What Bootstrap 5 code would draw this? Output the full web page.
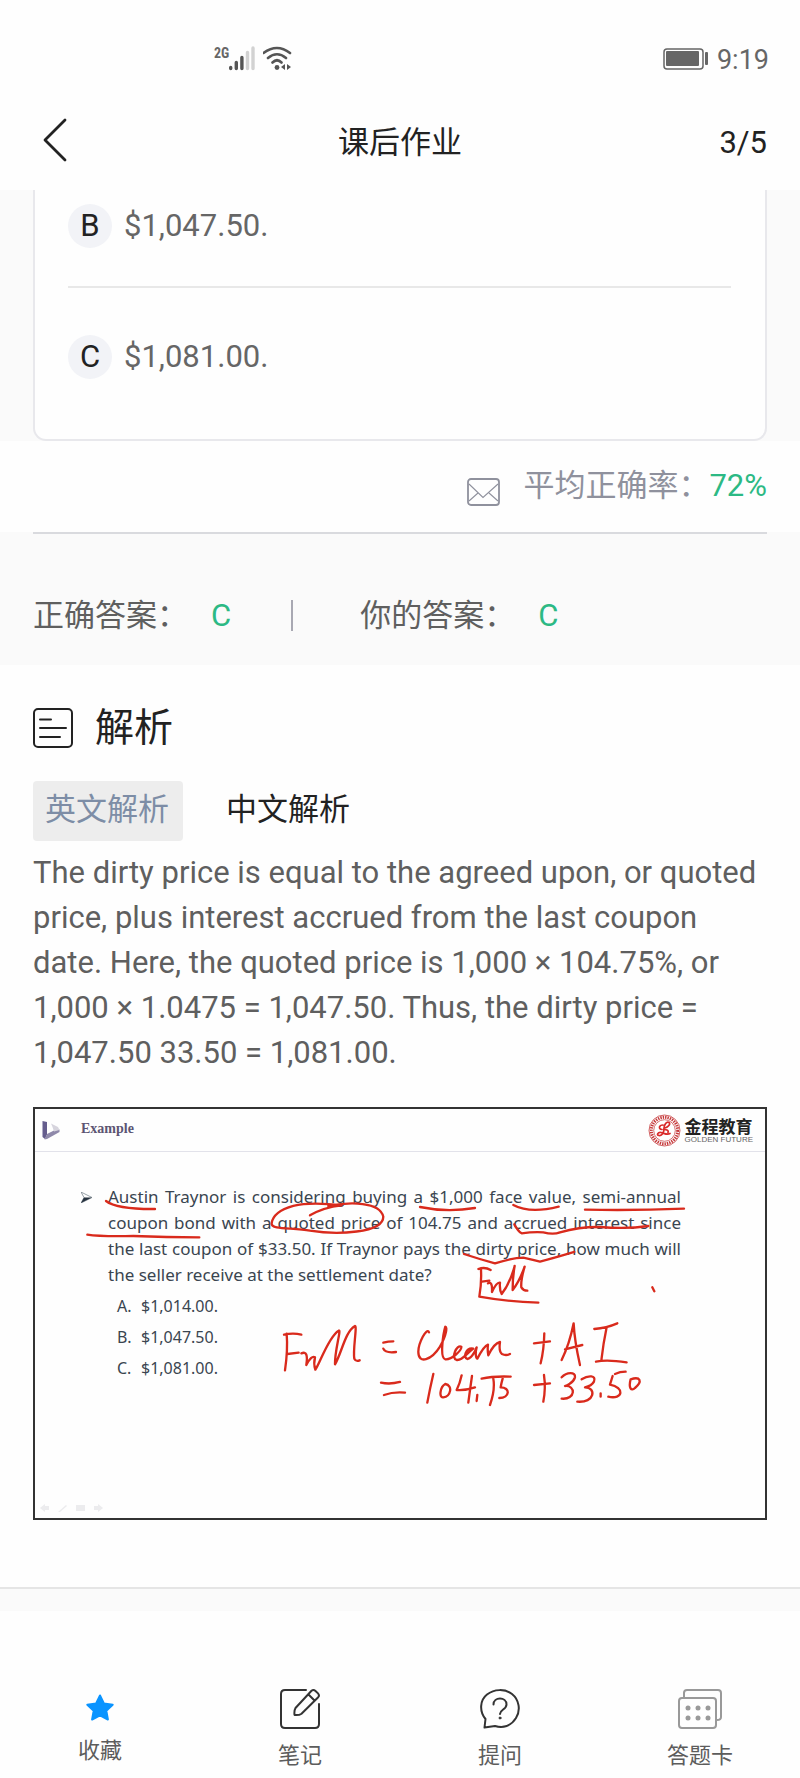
<!DOCTYPE html>
<html lang="zh-CN">
<head>
<meta charset="utf-8">
<meta name="viewport" content="width=device-width, initial-scale=1">
<title>课后作业</title>
<link rel="stylesheet" href="https://cdn.jsdelivr.net/npm/bootstrap@5.3.0/dist/css/bootstrap.min.css">
<style>
  :root { --page-gutter: 33px; --muted: #666; --soft: #fafafa; --ok: #2cb984; }
  body { font: 31px/45px Roboto, "Noto Sans CJK SC", sans-serif; color: #222; background: #fefefe; }
  button { font: inherit; color: inherit; background: none; border: 0; padding: 0; text-align: left; }
  svg { display: block; flex: none; }
  .gutter { padding-left: var(--page-gutter); padding-right: var(--page-gutter); }
  .soft { background: var(--soft); }
  .ok { color: var(--ok); }

  .status-bar { height: 90px; padding: 46px 31px 0 214px; color: var(--muted); }
  .net-type { font: 700 14px/14px "Roboto Condensed", Roboto, sans-serif; }
  .clock { font-size: 27px; line-height: 28px; }
  .title-bar { height: 100px; }
  .title-bar > * { flex: 1 1 0; }
  .title-bar h1, .title-bar .page-count { font-size: 31px; line-height: 45px; font-weight: 400; padding-top: 4px; }

  .options { background: #fefefe; border: 2px solid #e8e8ec; border-top: 0; border-radius: 0 0 13px 13px; padding: 0 34px 22px 33px; }
  .option { padding: 46px 0 38px; gap: 12px; color: var(--muted); }
  .option:first-child { padding-top: 13px; border-bottom: 2px solid #e8e8e8; }
  .letter { width: 44px; height: 44px; border-radius: 50%; background: #f2f3f7; color: #222; line-height: 43px; text-align: center; }

  .rate { padding-top: 22px; padding-bottom: 24px; color: #8f919d; gap: 23px; }
  .rate svg { margin-top: 15px; }
  .rule { height: 2px; background: #d9dade; }
  .answers { padding-top: 59px; padding-bottom: 27px; color: #5f5f5f; }
  .answers .ok { margin-left: 23px; }
  .answers .bar { width: 2px; height: 31px; background: #a8a8b2; margin: 0 67px 0 60px; }

  .analysis { padding-top: 38px; padding-bottom: 67px; }
  .analysis h2 { font-size: 39px; line-height: 50px; font-weight: 400; gap: 22px; }
  .tabs { gap: 31px; padding-top: 28px; }
  .tabs button { height: 60px; padding: 0 14px 4px 12px; border-radius: 4px; }
  .tabs .active { background: #ededed; color: #7d8da6; }
  .explain { color: #5f5f5f; margin: 9px 0 32px; }

  .slide { border: 2px solid #333; aspect-ratio: 734 / 413; background: #fefefe; color: #3a4550; font: 17px/26px "Noto Sans", sans-serif; }
  .slide-head { height: 43px; border-bottom: 1px solid #e2e2ea; padding: 0 12px 0 7px; }
  .slide-head h3 { font: 700 14px/20px "Liberation Serif", serif; color: #5c5573; margin: 0 0 2px 20px; }
  .brand-cn { font: 700 17px/20px "Noto Sans CJK SC", sans-serif; color: #222; }
  .brand-en { font: 8px/8px "Liberation Sans", sans-serif; color: #666; }
  .slide-body { padding: 32px 84px 0 46px; }
  .question { flex: 1; }
  .question span { display: block; white-space: nowrap; text-align: justify; text-align-last: justify; }
  .question span:last-child { text-align-last: left; }
  .choices { margin: 3px 0 0 9px; line-height: 31px; font-size: 16px; list-style: none; padding: 0; }
  .choices b { font-weight: 400; display: inline-block; width: 24px; }
  .ink { fill: none; stroke: #d92a1c; stroke-width: 7; stroke-linecap: round; stroke-linejoin: round; }
  .tools { left: 5px; bottom: 5px; }

  .strip { height: 24px; border-top: 2px solid #e5e5e5; }
  .bottom-nav { padding: 78px 0 11px; font-size: 22px; line-height: 22px; }
  .bottom-nav a { color: #5c5c5c; text-decoration: none; gap: 16px; }
</style>
</head>
<body>

<div class="status-bar d-flex align-items-start">
  <span class="net-type">2G</span>
  <svg width="26" height="25" viewBox="0 0 26 25" stroke-width="3.4" stroke-linecap="round">
    <g stroke="#555"><path d="M1.700 21.500v1M7.300 16.500v6M12.900 11.500v11"/></g>
    <path stroke="#d2d2d2" d="M18.500 6.500v16M24 2v20.500"/>
  </svg>
  <svg class="ms-2" width="30" height="25" viewBox="2 0 30 25" fill="none" stroke="#555" stroke-width="2.600" stroke-linecap="round">
    <path d="M2.500 7Q16 -3 29 7M7 12Q16 4.500 25 12M11.500 16.500Q16 12 20.500 16.500"/>
    <circle cx="16" cy="21.500" r="2.400" fill="#555" stroke="none"/>
    <path d="M24 18v6l-4-3zM26 18v6l4-3z" fill="#555" stroke="none"/>
  </svg>
  <svg class="ms-auto me-2" width="46" height="24" viewBox="0 -2 46 24">
    <rect x="1" y="1" width="39" height="20" rx="3" fill="none" stroke="#666" stroke-width="1.500"/>
    <rect x="3" y="3" width="33" height="15" rx="1" fill="#666"/>
    <rect x="42" y="4" width="3" height="13" rx="1" fill="#666"/>
  </svg>
  <time class="clock">9:19</time>
</div>

<header class="title-bar gutter d-flex align-items-center">
  <div>
    <button type="button" aria-label="返回" class="d-block ps-2">
      <svg width="28" height="46" viewBox="0 0 28 46" fill="none" stroke="#222" stroke-width="2.800" stroke-linecap="round" stroke-linejoin="round"><path d="M24 3L4 23l20 20"/></svg>
    </button>
  </div>
  <h1 class="m-0 text-center">课后作业</h1>
  <div class="page-count text-end">3/5</div>
</header>

<main>
  <section class="soft gutter">
    <div class="options">
      <button type="button" class="option d-flex align-items-center w-100"><span class="letter">B</span><span>$1,047.50.</span></button>
      <button type="button" class="option d-flex align-items-center w-100"><span class="letter">C</span><span>$1,081.00.</span></button>
    </div>
  </section>

  <section class="rate gutter d-flex justify-content-end">
    <svg width="33" height="28" viewBox="0 0 33 28" fill="none" stroke="#8f919d">
      <rect x="1" y="1" width="31" height="26" rx="3" stroke-width="1.800"/>
      <path d="M2 6l14 13.500L31 6M2 23l9-8M31 23l-9-8" stroke-width="1.100"/>
    </svg>
    <div>平均正确率：<span class="ok">72%</span></div>
  </section>

  <section class="soft gutter">
    <div class="rule"></div>
    <div class="answers d-flex align-items-center">
      <span>正确答案：</span><span class="ok">C</span>
      <span class="bar"></span>
      <span>你的答案：</span><span class="ok">C</span>
    </div>
  </section>

  <section class="analysis gutter">
    <h2 class="d-flex align-items-center m-0">
      <svg width="40" height="40" viewBox="0 0 40 40" fill="none" stroke="#222" stroke-width="2" stroke-linecap="round">
        <rect x="1" y="1" width="38" height="38" rx="4"/><path d="M7 11.500h11M7 20h26M7 29h20"/>
      </svg>
      <span>解析</span>
    </h2>
    <div class="tabs d-flex">
      <button type="button" class="active">英文解析</button>
      <button type="button">中文解析</button>
    </div>
    <p class="explain">The dirty price is equal to the agreed upon, or quoted price, plus interest accrued from the last coupon date. Here, the quoted price is 1,000 × 104.75%, or 1,000 × 1.0475 = 1,047.50. Thus, the dirty price = 1,047.50 33.50 = 1,081.00.</p>

    <div class="slide position-relative">
      <div class="slide-head d-flex align-items-center">
        <svg width="19" height="20" viewBox="0 0 19 20">
          <path d="M.5 1l4.500 1v12.500L3 19l-2.500-2z" fill="#655d8d"/><path d="M2.500 19.500L5 14l7-3.500 5.500-1V12L5 19z" fill="#8f89aa"/><path d="M9 3.500l7 3.500 1.500 3L12 11.500 10.500 7z" fill="#d6d4dd"/>
        </svg>
        <h3>Example</h3>
        <svg class="ms-auto" width="33" height="33" viewBox="0 0 33 33" fill="none" stroke="#c5383a">
          <circle cx="16.500" cy="16.500" r="15.500" stroke-width=".8"/>
          <circle cx="16.500" cy="16.500" r="13.200" stroke-width="3" stroke-dasharray="1.400 1"/>
          <circle cx="16.500" cy="16.500" r="10.800" stroke-width=".7"/>
          <path d="M17 14c3-1 6-4 4-5.500s-5 2-5 5.500c0 5-2 8-5 7.500s-1-3.500 2-3 6 3 9 1M15 11c-4 0-5 4-1 4.500M16 15.500c3 0 5 1 4 3" stroke="#d92a2a" stroke-width="1.700" stroke-linecap="round"/>
        </svg>
        <div class="ms-1">
          <div class="brand-cn">金程教育</div>
          <div class="brand-en">GOLDEN FUTURE</div>
        </div>
      </div>
      <div class="slide-body d-flex align-items-start">
        <svg class="mt-2 me-3" width="11" height="11" viewBox="0 0 11 11"><path d="M0 0l11 5.500L0 11l3-5.500z" fill="#fefefe" stroke="#6c7883" stroke-width=".7"/><path d="M0 11l3-5.500h8z" fill="#26323f"/></svg>
        <div class="question">
          <div>
            <span>Austin Traynor is considering buying a $1,000 face value, semi-annual</span>
            <span>coupon bond with a quoted price of 104.75 and accrued interest since</span>
            <span>the last coupon of $33.50. If Traynor pays the dirty price, how much will</span>
            <span>the seller receive at the settlement date?</span>
          </div>
          <ul class="choices">
            <li><b>A.</b>$1,014.00.</li>
            <li><b>B.</b>$1,047.50.</li>
            <li><b>C.</b>$1,081.00.</li>
          </ul>
        </div>
      </div>
      <!-- Teacher's pen marks over the slide -->
      <svg class="ink position-absolute top-0 start-0 w-100 h-100" viewBox="35 1109 730 409">
        <g transform="translate(0 1090) scale(.3333)">
          <path d="M318 333Q350 358 465 357M262 434Q300 440 400 438Q500 442 598 442"/>
          <path d="M930 376Q970 352 1025 346Q930 335 880 348Q820 365 815 400C812 420 880 412 930 422C1010 435 1150 430 1150 380C1140 335 1050 335 985 348"/>
        </g>
        <g transform="translate(400 1090) scale(.3333)">
          <path d="M60 351Q140 368 225 354M340 345Q390 372 476 350M555 359Q700 362 852 356"/>
          <path d="M343 403Q355 425 365 430Q400 425 430 427Q460 435 480 427Q540 410 600 411Q680 418 745 408"/>
          <path d="M192 492Q240 508 285 520Q340 503 370 503Q400 510 420 515Q460 505 523 486"/>
          <path d="M235 537Q255 530 272 540M243 540Q245 580 238 620Q320 635 415 638M246 575L268 572M264 580Q278 572 276 606Q290 575 300 578Q298 600 305 612Q330 580 344 528Q338 560 338 600Q358 575 374 530Q362 570 364 592Q370 602 382 602M757 592L763 604"/>
        </g>
        <g transform="translate(260 1300) scale(.3333)">
          <path d="M80 101Q84 150 75 211M72 104Q100 98 124 104M82 162L116 158M124 160Q146 150 139 195Q154 165 165 172Q160 190 166 209C178 195 205 110 236 92C245 86 224 150 225 193C245 160 255 95 285 78C292 78 278 150 283 176Q288 186 299 181"/>
          <path d="M370 128Q385 124 400 124M370 146Q376 160 408 156"/>
          <path d="M507 97C500 80 475 130 475 155C475 195 515 180 540 140C560 105 562 80 556 80C550 100 538 175 556 178C575 180 606 150 604 140C590 132 572 175 590 180C605 182 615 165 640 146C618 142 608 172 622 177C638 175 650 142 650 142C645 160 648 176 652 176Q672 138 684 134Q682 150 685 166Q702 130 720 126Q716 155 726 162Q738 168 750 162"/>
          <path d="M822 130L870 124M853 100Q852 150 842 190M905 180C920 150 935 100 941 70C943 110 950 150 960 195M915 148L967 135M1003 87Q1040 84 1072 70M1040 82Q1030 130 1024 182M1008 185Q1040 178 1100 187"/>
          <path d="M363 248Q390 254 420 246M372 285Q400 275 435 278M520 222Q510 265 502 308M556 252C540 260 536 295 550 292C572 290 580 256 556 252M605 226Q600 250 590 270Q615 272 645 262M636 228Q630 270 625 308M652 285L650 303M665 236Q700 228 752 230M700 236Q706 270 690 315M728 236Q724 250 722 262C752 262 750 294 718 294"/>
          <path d="M822 255L870 250M852 225Q858 265 850 305M905 232C920 215 948 215 945 232C940 250 915 258 915 258C948 255 948 300 905 296M965 238C985 225 1010 225 1002 245C995 258 975 262 975 262C1010 262 1005 310 952 305M1022 280L1022 290M1058 228L1050 254C1095 262 1090 300 1045 290M1065 222Q1080 215 1097 215M1112 238C1105 265 1114 275 1125 264C1148 245 1142 228 1112 238"/>
        </g>
      </svg>
      <svg class="tools position-absolute" width="64" height="10" viewBox="0 0 64 10" fill="#ececee">
        <path d="M0 5l5-4v2h4v4H5v2zM18 9l8-7 1 1-7 6zM36 2h9v6h-9zM63 5l-5-4v2h-4v4h4v2z"/>
      </svg>
    </div>
  </section>
  <div class="strip soft"></div>
</main>

<nav class="bottom-nav">
  <div class="row g-0">
    <a href="#" class="col d-flex flex-column align-items-center">
      <svg width="40" height="35" viewBox="0 0 40 35"><path d="M20 6.500l3.900 8 8.800 1.200-6.400 6.100 1.600 8.700L20 26.300l-7.900 4.200 1.600-8.700-6.400-6.100 8.800-1.200z" fill="#0a94ff" stroke="#0a94ff" stroke-width="2" stroke-linejoin="round"/></svg>
      <span>收藏</span>
    </a>
    <a href="#" class="col d-flex flex-column align-items-center">
      <svg width="40" height="40" viewBox="0 0 40 40" fill="none" stroke="#333" stroke-width="2" stroke-linecap="round" stroke-linejoin="round">
        <path d="M26 1H5Q1 1 1 5v30q0 4 4 4h30q4 0 4-4V15"/>
        <path d="M31.500 1.800q2-1.600 4 .2l2.500 2.400q1.800 2 .2 3.800L21.500 24.700Q19 26.500 14.500 26 14 21.500 15.500 19zM28.500 5.500l6 6"/>
      </svg>
      <span>笔记</span>
    </a>
    <a href="#" class="col d-flex flex-column align-items-center">
      <svg width="40" height="40" viewBox="0 0 40 40" fill="none" stroke="#333" stroke-width="2" stroke-linecap="round" stroke-linejoin="round">
        <path d="M4.500 38.500l1-8.500C-1 22 0 11 7 5.500S25-.5 32 5s9 16 4 24-13 10.500-21 8z"/>
        <path d="M13.500 15.500c0-8 13-8 13 0 0 5-6.500 5-6.500 9.500"/><circle cx="20" cy="29" r="1" fill="#333" stroke-width="1"/>
      </svg>
      <span>提问</span>
    </a>
    <a href="#" class="col d-flex flex-column align-items-center">
      <svg width="44" height="40" viewBox="0 0 44 40" fill="none" stroke="#999" stroke-width="2" stroke-linejoin="round">
        <rect x="1" y="9" width="37" height="30" rx="3"/><path d="M6 8V4q0-3 3-3h31q3 0 3 3v24q0 3-4 3"/>
        <g fill="#999" stroke="none"><circle cx="10" cy="19" r="2.500"/><circle cx="20" cy="19" r="2.500"/><circle cx="30" cy="19" r="2.500"/><circle cx="10" cy="29" r="2.500"/><circle cx="20" cy="29" r="2.500"/><circle cx="30" cy="29" r="2.500"/></g>
      </svg>
      <span>答题卡</span>
    </a>
  </div>
</nav>

<script src="https://cdn.jsdelivr.net/npm/bootstrap@5.3.0/dist/js/bootstrap.bundle.min.js"></script>
</body>
</html>
